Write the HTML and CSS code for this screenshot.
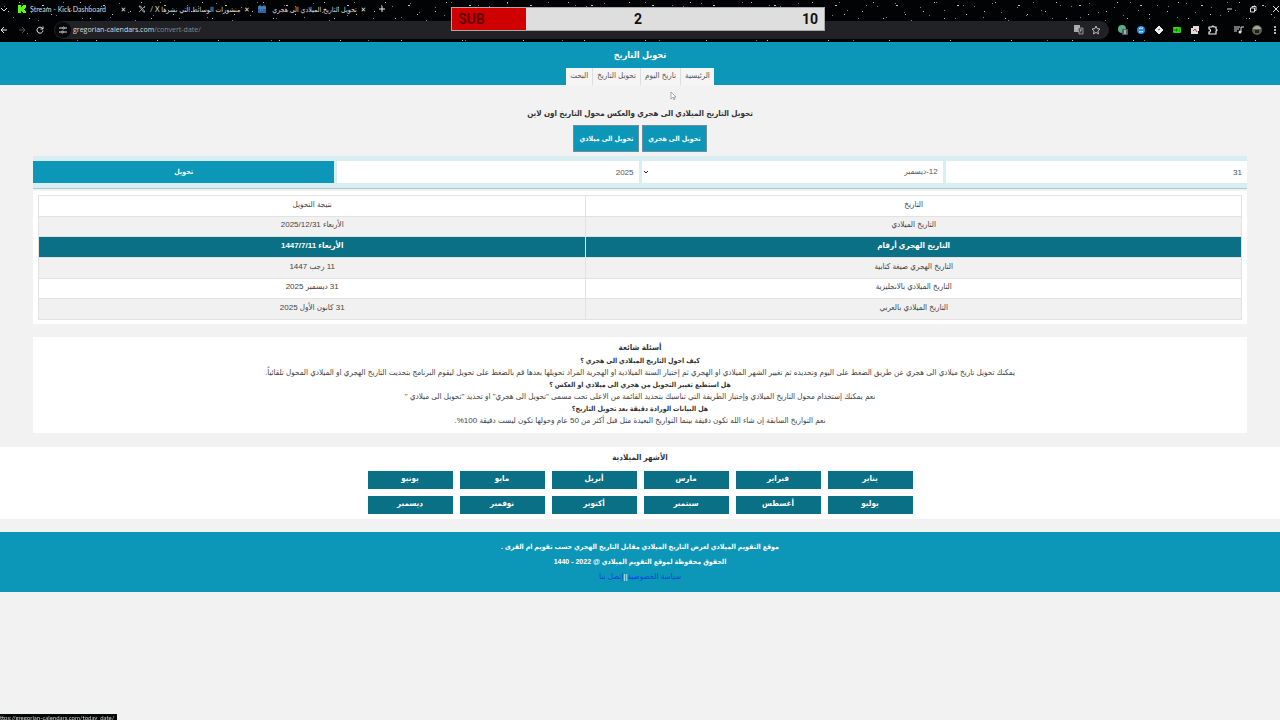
FILE: index.html
```
<!DOCTYPE html>
<html lang="ar" dir="rtl">
<head>
    <meta charset="UTF-8">
    <title>تحويل التاريخ</title>
    <link rel="stylesheet" href="styles.css">
</head>
<body>
    <div class="browser" dir="ltr">
        <svg class="stars" aria-hidden="true">
            <defs>
                <pattern id="far" width="97" height="45" patternUnits="userSpaceOnUse">
                    <g fill="#77808a">
                        <rect x="4" y="6" width="1" height="1"/><rect x="13" y="17" width="1" height="1"/>
                        <rect x="22" y="3" width="1" height="1"/><rect x="31" y="12" width="1" height="1"/>
                        <rect x="38" y="20" width="1" height="1"/><rect x="47" y="7" width="1" height="1"/>
                        <rect x="56" y="15" width="1" height="1"/><rect x="63" y="2" width="1" height="1"/>
                        <rect x="71" y="10" width="1" height="1"/><rect x="82" y="18" width="1" height="1"/>
                        <rect x="90" y="5" width="1" height="1"/><rect x="77" y="40" width="1" height="1"/>
                        <rect x="27" y="33" width="1" height="1"/>
                    </g>
                </pattern>
                <pattern id="near" width="61" height="43" patternUnits="userSpaceOnUse">
                    <g fill="#c4c8cc">
                        <rect x="8" y="11" width="1" height="1"/><rect x="19" y="2" width="1" height="1"/>
                        <rect x="29" y="18" width="1" height="1"/><rect x="42" y="5" width="2" height="1"/>
                        <rect x="51" y="14" width="1" height="1"/><rect x="35" y="40" width="1" height="1"/>
                    </g>
                </pattern>
            </defs>
            <rect width="100%" height="42" fill="url(#far)"/>
            <rect width="100%" height="42" fill="url(#near)"/>
        </svg>
        <div class="tabs">
            <svg class="chevron" viewBox="0 0 8 8"><path d="M1 3l3 3 3-3" fill="none" stroke="#ddd"/></svg>
            <div class="tab">
                <svg class="favicon" viewBox="0 0 8 8"><path d="M0 0h3v2h1V1h1V0h3v3H7v1H6v1h1v1h1v2H5V7H4V6H3v2H0z" fill="#53fc18"/></svg>
                <span>Stream - Kick Dashboard</span>
                <button class="close" aria-label="Close">✕</button>
            </div>
            <div class="tab">
                <svg class="favicon" viewBox="0 0 8 8"><path d="M1 1h1.500l4.500 6H5.500zM7 1L4.600 3.600M3.500 4.600L1 7" fill="none" stroke="#ddd" stroke-width=".7"/></svg>
                <span dir="rtl">منشورات الوسائط التي نشرها X /</span>
                <button class="close" aria-label="Close">✕</button>
            </div>
            <div class="tab">
                <svg class="favicon" viewBox="0 0 8 8"><path d="M0 1h8v7H0z" fill="#2764a0"/><path d="M0 3h8M2 0v2M6 0v2M2 5h1M4 5h1" stroke="#8ec1ea" stroke-width=".6"/></svg>
                <span dir="rtl">تحويل التاريخ الميلادي الى هجري</span>
                <button class="close" aria-label="Close">✕</button>
            </div>
            <button class="new-tab" aria-label="New tab"><svg viewBox="0 0 8 8"><path d="M4 1v6M1 4h6" stroke="#eee"/></svg></button>
            <div class="window-buttons">
                <svg viewBox="0 0 8 8"><path d="M1 4h5" stroke="#ddd"/></svg>
                <svg viewBox="0 0 8 8"><path d="M1.500 3h4v4h-4zM3 3V1.500h4v4H5.500" fill="none" stroke="#ddd"/></svg>
                <svg viewBox="0 0 8 8"><path d="M1 1l6 6M7 1L1 7" stroke="#ddd"/></svg>
            </div>
        </div>
        <div class="toolbar">
            <div class="nav-buttons">
                <svg viewBox="0 0 8 8"><path d="M7 4H1M4 1L1 4l3 3" fill="none" stroke="#eee"/></svg>
                <svg viewBox="0 0 8 8"><path d="M1 4h6M4 1l3 3-3 3" fill="none" stroke="#555"/></svg>
                <svg viewBox="0 0 8 8"><path d="M6.500 2.500A3 3 0 1 0 7 4.500M7 .500v2.500H4.500" fill="none" stroke="#eee"/></svg>
            </div>
            <div class="address">
                <span class="site-info"><svg viewBox="0 0 8 8"><path d="M0 2h3M6 2h2M0 6h2M5 6h3" stroke="#ddd"/><circle cx="4.500" cy="2" r="1" fill="none" stroke="#ddd"/><circle cx="3.500" cy="6" r="1" fill="none" stroke="#ddd"/></svg></span>
                <span class="url"><b>gregorian-calendars.com</b>/convert-date/</span>
                <svg viewBox="0 0 10 10"><path d="M0 0h6v7H0z" fill="#aaa"/><path d="M4 3h5v6H5z" fill="#333" stroke="#aaa" stroke-width=".8"/><path d="M1.500 3.500h2M5.500 5h2.500M6.800 4v1l-1 2.500" stroke="#ccc" stroke-width=".6" fill="none"/></svg>
                <svg viewBox="0 0 10 10"><path d="M5 1l1.200 2.700 2.800.3-2.100 2 .6 2.900L5 7.400 2.500 8.900l.6-2.900L1 4l2.800-.3z" fill="none" stroke="#ccc" stroke-width=".9"/></svg>
            </div>
            <div class="extensions">
                <svg viewBox="0 0 10 10"><circle cx="4" cy="4" r="4" fill="#58b184"/><rect x="4" y="4" width="6" height="6" rx="1" fill="#51606a"/><path d="M7 5v4" stroke="#fff"/></svg>
                <svg viewBox="0 0 10 10"><circle cx="5" cy="5" r="4" fill="#248ee5"/><path d="M3 4c1-2 2 0 4-1M3 7c2-1 3 1 4-1" fill="none" stroke="#fff"/></svg>
                <svg viewBox="0 0 10 10"><path d="M5 1l4 4-4 4-4-4z" fill="#eee" stroke="#eee" stroke-linejoin="round"/><path d="M4 5l2-1" stroke="#555"/></svg>
                <svg viewBox="0 0 10 10"><rect x="1" y="2" width="8" height="6" rx="1" fill="#35d90c"/><path d="M2 4v2M4 4v2h1V4zM7 4h1M7 6h1" stroke="#0b5902" stroke-width=".8" fill="none"/></svg>
                <svg viewBox="0 0 10 10"><path d="M3 1h6v5H8v3H1V3h2z" fill="#ddd"/><path d="M3 6l2-2 2 3" fill="none" stroke="#b33"/></svg>
                <svg viewBox="0 0 10 10"><path d="M1 2h3a1 1 0 0 1 2 0h2v2a1 1 0 0 1 0 2v3H1V7a1 1 0 0 0 0-3z" fill="none" stroke="#eee" stroke-width="1.200"/></svg>
                <svg class="media" viewBox="0 0 10 10"><path d="M0 2h6M0 4h5M0 6h3M7 7V2h3" fill="none" stroke="#ddd"/><circle cx="6" cy="7" r="1.500" fill="#ddd"/></svg>
                <svg class="avatar" viewBox="0 0 10 10"><circle cx="5" cy="5" r="5" fill="#59604d"/><path d="M1 3q4-4 8 0v1H1z" fill="#a5aa9c"/><path d="M3 5h4v3H3z" fill="#1c211b"/></svg>
                <svg viewBox="0 0 10 10"><path d="M5 1v2M5 4v2M5 7v2" stroke="#eee" stroke-width="1.500"/></svg>
            </div>
        </div>
        <div class="sub-goal"><span>SUB</span><span>2</span><span>10</span></div>
    </div>

    <header>
        <h1>تحويل التاريخ</h1>
        <nav>
            <a href="#">الرئيسية</a>
            <a href="#">تاريخ اليوم</a>
            <a href="#">تحويل التاريخ</a>
            <a href="#">البحث</a>
        </nav>
    </header>

    <main>
        <h2>تحويل التاريخ الميلادي الى هجري والعكس محول التاريخ اون لاين</h2>
        <div class="modes">
            <button>تحويل الى هجري</button>
            <button>تحويل الى ميلادي</button>
        </div>
        <form class="convert">
            <input type="text" aria-label="اليوم" value="31">
            <div class="month">
                <select aria-label="الشهر"><option>12-ديسمبر</option></select>
                <svg viewBox="0 0 6 6"><path d="M1 2l2 2 2-2" fill="none" stroke="#222"/></svg>
            </div>
            <input type="text" aria-label="السنة" value="2025">
            <button type="button">تحويل</button>
        </form>
        <div class="result">
            <table>
                <tr><td>التاريخ</td><td>نتيجة التحويل</td></tr>
                <tr><td>التاريخ الميلادي</td><td>الأربعاء 2025/12/31</td></tr>
                <tr class="active"><td>التاريخ الهجري أرقام</td><td>الأربعاء 1447/7/11</td></tr>
                <tr><td>التاريخ الهجري صيغة كتابية</td><td>11 رجب 1447</td></tr>
                <tr><td>التاريخ الميلادي بالانجليزية</td><td>31 ديسمبر 2025</td></tr>
                <tr><td>التاريخ الميلادي بالعربي</td><td>31 كانون الأول 2025</td></tr>
            </table>
        </div>
        <section class="faq">
            <h2>أسئلة شائعة</h2>
            <h3>كيف احول التاريخ الميلادي الى هجري ؟</h3>
            <p>يمكنك تحويل تاريخ ميلادي الى هجري عن طريق الضغط على اليوم وتحديده ثم تغيير الشهر الميلادي او الهجري ثم إختيار السنة الميلادية او الهجرية المراد تحويلها بعدها قم بالضغط على تحويل ليقوم البرنامج بتحديث التاريخ الهجري او الميلادي المحول تلقائياً.</p>
            <h3>هل استطيع تغيير التحويل من هجري الى ميلادي او العكس ؟</h3>
            <p>نعم يمكنك إستخدام محول التاريخ الميلادي وإختيار الطريقة التي تناسبك بتحديد القائمة من الاعلى تحت مسمى "تحويل الى هجري" او تحديد "تحويل الى ميلادي "</p>
            <h3>هل البيانات الورادة دقيقة بعد تحويل التاريخ؟</h3>
            <p>نعم التواريخ السابقة إن شاء الله تكون دقيقة بينما التواريخ البعيدة مثل قبل أكثر من 50 عام وحولها تكون ليست دقيقة 100%.</p>
        </section>
    </main>

    <section class="months">
        <h2>الأشهر الميلادية</h2>
        <div class="month-list">
            <a href="#">يناير</a>
            <a href="#">فبراير</a>
            <a href="#">مارس</a>
            <a href="#">أبريل</a>
            <a href="#">مايو</a>
            <a href="#">يونيو</a>
            <a href="#">يوليو</a>
            <a href="#">أغسطس</a>
            <a href="#">سبتمبر</a>
            <a href="#">أكتوبر</a>
            <a href="#">نوفمبر</a>
            <a href="#">ديسمبر</a>
        </div>
    </section>

    <footer>
        <p>موقع التقويم الميلادي لعرض التاريخ الميلادي مقابل التاريخ الهجري حسب تقويم ام القرى .</p>
        <p>الحقوق محفوظة لموقع التقويم الميلادي @ 2022 - 1440</p>
        <p class="links"><a href="#">سياسة الخصوصية</a>||<a href="#">إتصل بنا</a></p>
    </footer>

    <div class="status" dir="ltr">ttps://gregorian-calendars.com/today_date/</div>
    <svg class="cursor" viewBox="0 0 6 10"><path d="M1 1v7l2-2 1 3 1-1-1-2h2z" fill="#fff" stroke="#888" stroke-width=".7"/></svg>
</body>
</html>
```
FILE: styles.css
```
* {
    box-sizing: border-box;
}

body {
    margin: 0;
    background-color: #f2f2f2;
    color: #444;
    font-family: "Liberation Sans", "DejaVu Sans Condensed", "DejaVu Sans", sans-serif;
    font-size: 8px;
    line-height: 12px;
    text-align: center;
}

h1, h2, h3, p {
    margin: 0;
}

button, input, select {
    font: inherit;
    border: 0;
    border-radius: 0;
}

a {
    text-decoration: none;
}

/* browser bar */
.browser {
    position: relative;
    height: 42px;
    overflow: hidden;
    background-color: #020304;
    color: #ddd;
    font-family: "Open Sans", "DejaVu Sans Condensed", "DejaVu Sans", sans-serif;
    font-size: 7px;
}

.browser svg {
    width: 8px;
    height: 8px;
    flex: none;
}

.browser .stars {
    position: absolute;
    top: 0;
    left: 0;
    width: 100%;
    height: 42px;
}

.tabs, .toolbar {
    position: relative;
    display: flex;
    align-items: center;
}

.tabs {
    height: 18px;
    font-family: Lato, "DejaVu Sans Condensed", "DejaVu Sans", sans-serif;
}

.browser .chevron {
    margin-right: 10px;
}

.tab {
    display: flex;
    align-items: center;
    gap: 4px;
    width: 120px;
    padding-right: 12px;
    white-space: nowrap;
}

.tab span {
    flex: 1;
    text-align: left;
}

.tab span[dir="rtl"] {
    text-align: right;
}

.close, .new-tab {
    padding: 0;
    background: none;
    color: #eee;
    line-height: 8px;
}

.new-tab {
    display: flex;
}

.window-buttons {
    display: flex;
    gap: 15px;
    margin-left: auto;
}

.toolbar {
    height: 24px;
    padding-bottom: 1px;
}

.nav-buttons {
    display: flex;
    gap: 10px;
    width: 54px;
}

.address {
    flex: 1;
    display: flex;
    align-items: center;
    gap: 7px;
    height: 18px;
    padding: 0 8px 0 1px;
    border-radius: 9px;
    background-color: #202225;
}

.site-info {
    display: flex;
    padding: 4px;
    margin-right: -5px;
    border-radius: 8px;
    background-color: #08090a;
}

.url {
    flex: 1;
    text-align: left;
    color: #888;
}

.url b {
    color: #ddd;
    font-weight: normal;
}

.extensions {
    display: flex;
    align-items: center;
    gap: 8px;
    padding-left: 9px;
}

.browser .address > svg,
.browser .extensions svg {
    width: 10px;
    height: 10px;
}

.extensions .media {
    margin-left: 8px;
}

.sub-goal {
    position: absolute;
    top: 7px;
    left: 50%;
    display: grid;
    grid-template-columns: 1fr 1fr 1fr;
    width: 374px;
    height: 24px;
    margin-left: -189px;
    padding: 0 6px;
    border: 1px solid #a9a9a9;
    background: linear-gradient(to right, #d00000 20%, #dedede 20%);
    color: #111;
    font: bold 14px/22px Roboto, sans-serif;
}

.sub-goal span:first-child {
    color: #600;
    text-align: left;
}

.sub-goal span:last-child {
    text-align: right;
}

/* site header */
header {
    height: 43px;
    padding-top: 5px;
    background-color: #0c97b8;
}

h1 {
    color: #fff;
    font-size: 9px;
    line-height: 16px;
}

nav {
    display: inline-flex;
    margin-top: 5px;
    background-color: #f5f5f5;
}

nav a {
    padding: 0 4px;
    border-left: 1px solid #ddd;
    color: #555;
    line-height: 16px;
    padding-bottom: 1px;
}

nav a:last-child {
    border-left: 0;
}

/* converter */
main {
    margin: 0 33px;
    padding-top: 22px;
}

h2 {
    color: #333;
    font-size: 8px;
    line-height: 14px;
}

.modes {
    display: flex;
    justify-content: center;
    gap: 3px;
    margin: 4px 0;
}

.modes button {
    height: 27px;
    padding: 0 5px;
    border: 1px solid #6e8f99;
    background-color: #0c97b8;
    color: #fff;
    font-size: 7px;
    font-weight: bold;
}

.convert {
    display: grid;
    grid-template-columns: repeat(4, 1fr);
    gap: 3px;
    padding: 5px 0;
    border-bottom: 1px solid #a9c9cd;
    background-color: #daedf3;
}

.convert input, .convert select, .convert button {
    width: 100%;
    height: 22px;
    padding: 0 5px;
    background-color: #fff;
    color: #555;
    text-align: right;
}

.convert select {
    appearance: none;
}

.convert button {
    background-color: #0c97b8;
    color: #fff;
    font-size: 7px;
    font-weight: bold;
    text-align: center;
}

.month {
    position: relative;
}

.month svg {
    position: absolute;
    top: 8px;
    left: 1px;
    width: 6px;
    height: 6px;
}

.result {
    margin-top: 2px;
    padding: 4px 5px;
    background-color: #fff;
}

table {
    width: 100%;
    height: 125px;
    border-collapse: collapse;
}

td {
    padding: 0 0 2px;
    border: 1px solid #e2e2e2;
}

td:first-child {
    width: 54.5%;
}

tr:nth-child(even) {
    background-color: #f1f1f1;
}

tr.active {
    background-color: #0a7085;
    color: #fff;
    font-weight: bold;
}

.faq {
    margin: 13px 0 14px;
    padding: 4px 0 6px;
    background-color: #fff;
}

h3 {
    color: #333;
    font-size: 7px;
    line-height: 12px;
}

/* months */
.months {
    padding: 4px 0 5px;
    background-color: #fff;
}

.month-list {
    display: grid;
    grid-template-columns: repeat(6, 85px);
    justify-content: center;
    gap: 7px;
    margin-top: 6px;
}

.month-list a {
    height: 18px;
    background-color: #0a7085;
    color: #fff;
    font-weight: bold;
    line-height: 16px;
}

footer {
    margin-top: 13px;
    padding: 7px 0 8px;
    background-color: #0c97b8;
    color: #fff;
    font-size: 7px;
    font-weight: bold;
    line-height: 15px;
}

.links {
    font-size: 8px;
    font-weight: normal;
}

.links a {
    color: #0645e0;
}

/* link preview and pointer */
.status {
    position: fixed;
    bottom: 0;
    left: 0;
    height: 6px;
    padding-right: 3px;
    background-color: #050707;
    color: #ccc;
    font-family: Lato, sans-serif;
    font-size: 6px;
    line-height: 8px;
    white-space: nowrap;
}

.cursor {
    position: absolute;
    top: 91px;
    left: 670px;
    width: 6px;
    height: 10px;
}
```
